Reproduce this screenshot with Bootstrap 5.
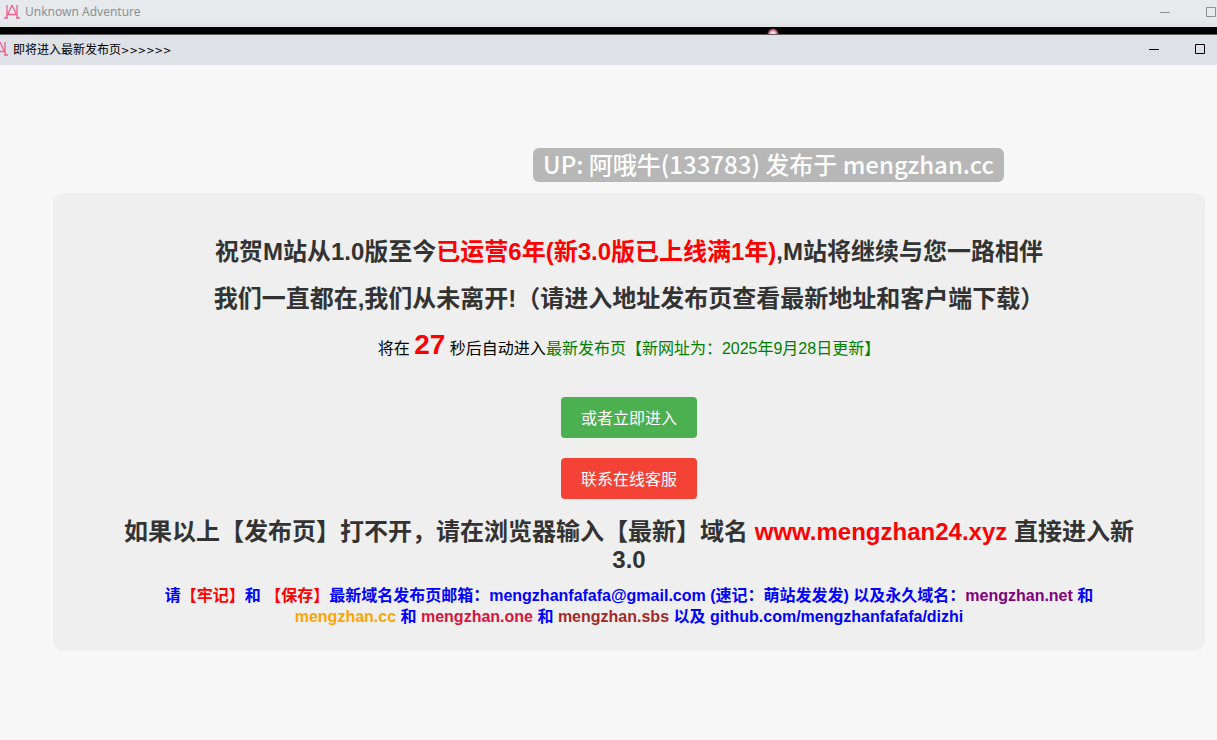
<!DOCTYPE html>
<html lang="zh-CN">
<head>
<meta charset="utf-8">
<meta name="viewport" content="width=device-width, initial-scale=1">
<title>即将进入最新发布页</title>
<link href="https://cdn.jsdelivr.net/npm/bootstrap@5.3.0/dist/css/bootstrap.min.css" rel="stylesheet">
<style>
  body { background: #f7f7f7; color: #000; font-family: "Liberation Sans", "Noto Sans CJK SC", sans-serif; text-spacing-trim: space-all; }
  a { color: inherit; text-decoration: none; }
  .bar-outer { height: 27px; padding: 0 1px 4px 4px; background: linear-gradient(#e6eaec 70%, #dfe3e5); color: #8c9194; font-family: "Noto Sans", sans-serif; font-size: 12px; }
  .bar-inner { height: 31px; background: #dee1e6; border-top: 1px solid #5e5a60; font-family: "Noto Sans CJK SC", sans-serif; font-size: 12px; padding: 0 12px 2px 0; }
  .bar-inner .logo { margin-left: -8px; }
  .bar-inner .arrows { font-family: "DejaVu Sans", sans-serif; font-size: 10px; }
  .title-group { gap: 5px; }
  .strip { height: 7px; background: #000; padding-left: 328px; }
  .glow { width: 12px; height: 7px; background: radial-gradient(circle at 6px 7px, #efdde4 2px, #d0708f 4px, #000 6px); }
  .ctl { border: 0; padding: 0; background: none; color: inherit; line-height: 0; }
  .gap-ctl { gap: 36px; }
  .mark-row { padding: 83px 0 11px 320px; }
  .up-mark { background: #b7b7b7; color: #fff; border-radius: 6px; height: 34px; line-height: 32px; padding: 0 10px; font-family: "Noto Sans CJK SC", sans-serif; font-size: 24px; font-weight: 500; }
  .notice { margin: 0 12px 0 53px; padding: 45px 64px 24px; background: #efefef; border-radius: 10px; }
  .headline { font-size: 24px; line-height: 28px; font-weight: 700; color: #333; margin: 0 0 19px; }
  .headline-last { margin-bottom: 11px; }
  .red { color: #f00; }
  .green { color: green; }
  .count { line-height: 26px; margin: 0 0 35px; }
  .count strong { font-size: 28px; color: #f00; }
  .go-list { gap: 20px; margin-bottom: 19px; }
  .go { width: 136px; height: 41px; border-radius: 4px; border: 0; padding: 2px 0 0; color: #fff; font-size: 16px; }
  .go-enter { background: #4caf50; }
  .go-help { background: #f44336; }
  .mails { font-size: 16px; line-height: 21px; font-weight: 700; color: #00f; margin: 0; }
  .net { color: purple; }
  .cc { color: orange; }
  .one { color: crimson; }
  .sbs { color: brown; }
</style>
</head>
<body>
<header>
  <div class="bar-outer d-flex align-items-center justify-content-between overflow-hidden">
    <div class="title-group d-flex align-items-center">
      <svg width="16" height="16" viewBox="0 0 16 16" fill="none" stroke="#f2608f" stroke-width="1.300" aria-hidden="true"><path d="M3 1v11M13 1v11M8 1L2 14M8 1l6 13M4 10.500h8M0 14h4M12 14h4"/></svg>
      <span>Unknown Adventure</span>
    </div>
    <div class="d-flex align-items-center gap-ctl">
      <button class="ctl" type="button" aria-label="最小化"><svg width="10" height="10"><path d="M0 5.500h10" stroke="currentColor"/></svg></button>
      <button class="ctl" type="button" aria-label="最大化"><svg width="10" height="10"><path d="M.5.5h9v9h-9z" fill="none" stroke="currentColor"/></svg></button>
    </div>
  </div>
  <div class="strip d-flex justify-content-center"><div class="glow"></div></div>
  <div class="bar-inner d-flex align-items-center justify-content-between overflow-hidden">
    <div class="title-group d-flex align-items-center">
      <svg class="logo" width="16" height="16" viewBox="0 0 16 16" fill="none" stroke="#f2608f" stroke-width="1.300" aria-hidden="true"><path d="M3 1v11M13 1v11M8 1L2 14M8 1l6 13M4 10.500h8M0 14h4M12 14h4"/></svg>
      <span>即将进入最新发布页<span class="arrows">&gt;&gt;&gt;&gt;&gt;&gt;</span></span>
    </div>
    <div class="d-flex align-items-center gap-ctl">
      <button class="ctl" type="button" aria-label="最小化"><svg width="10" height="10"><path d="M0 5.500h10" stroke="currentColor"/></svg></button>
      <button class="ctl" type="button" aria-label="最大化"><svg width="10" height="10"><path d="M.5.5h9v9h-9z" fill="none" stroke="currentColor"/></svg></button>
    </div>
  </div>
</header>
<div class="mark-row d-flex justify-content-center"><div class="up-mark text-nowrap">UP: 阿哦牛(133783) 发布于 mengzhan.cc</div></div>
<main class="notice text-center">
  <h2 class="headline">祝贺M站从1.0版至今<span class="red">已运营6年(新3.0版已上线满1年)</span>,M站将继续与您一路相伴</h2>
  <h2 class="headline">我们一直都在,我们从未离开!（请进入地址发布页查看最新地址和客户端下载）</h2>
  <p class="count">将在 <strong>27</strong> 秒后自动进入<a href="#" class="green">最新发布页【新网址为：2025年9月28日更新】</a></p>
  <div class="go-list d-flex flex-column align-items-center">
    <button type="button" class="go go-enter">或者立即进入</button>
    <button type="button" class="go go-help">联系在线客服</button>
  </div>
  <h2 class="headline headline-last">如果以上【发布页】打不开，请在浏览器输入【最新】域名 <a href="#" class="red">www.mengzhan24.xyz</a> 直接进入新3.0</h2>
  <p class="mails">请<span class="red">【牢记】</span>和 <span class="red">【保存】</span>最新域名发布页邮箱：mengzhanfafafa@gmail.com (速记：萌站发发发) 以及永久域名：<a href="#" class="net">mengzhan.net</a> 和 <a href="#" class="cc">mengzhan.cc</a> 和 <a href="#" class="one">mengzhan.one</a> 和 <a href="#" class="sbs">mengzhan.sbs</a> 以及 <a href="#">github.com/mengzhanfafafa/dizhi</a></p>
</main>
<script src="https://cdn.jsdelivr.net/npm/bootstrap@5.3.0/dist/js/bootstrap.bundle.min.js"></script>
</body>
</html>
